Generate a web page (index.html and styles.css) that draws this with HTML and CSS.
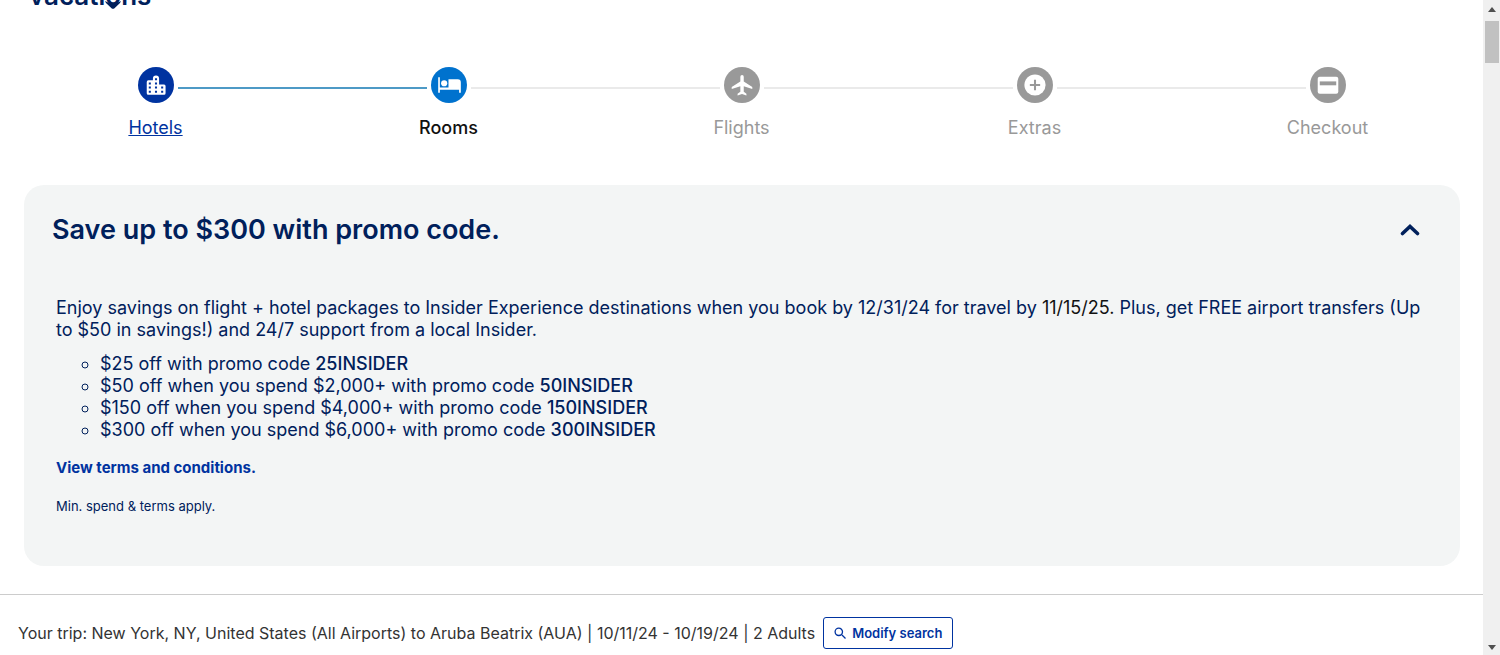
FILE: index.html
```html
<!DOCTYPE html>
<html lang="en">
<head>
<meta charset="utf-8">
<title>Vacations - Rooms</title>
<link rel="stylesheet" href="styles.css">
</head>
<body>
<div class="window">
  <div class="page">
    <header class="header">
      <a class="logo" href="#">vacati<span class="logo-pin">o<svg class="logo-tip" viewBox="0 0 16 8" aria-hidden="true"><path d="M0 0 Q8 5 16 0 L15 2 9.500 7.200Q8 8.500 6.500 7.200L1 2Z" fill="#00205b"/></svg></span>ns</a>
    </header>

    <nav aria-label="Booking progress">
      <ol class="steps">
        <li class="step step-done">
          <svg class="step-icon" viewBox="0 0 35 35" aria-hidden="true"><circle cx="17.500" cy="17.500" r="17.500" fill="currentColor"/><path fill="#fff" d="M8.500 14.500a1.500 1.500 0 0 1 1.500-1.500h4.500v-1.800a3 3 0 0 1 6 0V17h4.800a1.500 1.500 0 0 1 1.500 1.500v7a1.500 1.500 0 0 1-1.500 1.500H10a1.500 1.500 0 0 1-1.500-1.500z"/><path fill="currentColor" d="M10.500 15h2v2h-2zm0 4h2v2h-2zm0 4h2v2h-2zM16.500 11h2v2h-2zm0 4h2v2h-2zm0 4h2v2h-2zm0 4h2v2h-2zM22.500 19h2v2h-2zm0 4h2v2h-2z"/></svg>
          <a class="step-label" href="#">Hotels</a>
        </li>
        <li class="step step-current" aria-current="step">
          <svg class="step-icon" viewBox="0 0 35 35" aria-hidden="true"><circle cx="17.500" cy="17.500" r="17.500" fill="currentColor"/><path fill="#fff" d="M7 10h1.600v10H17v-8h9q3 0 3 3v10h-1.700v-3H8.600v3H7z"/><circle cx="12.800" cy="15.800" r="3" fill="#fff"/></svg>
          <span class="step-label">Rooms</span>
        </li>
        <li class="step">
          <svg class="step-icon" viewBox="0 0 35 35" aria-hidden="true"><circle cx="17.500" cy="17.500" r="17.500" fill="currentColor"/><path fill="#fff" d="M27.500 21.500v-2l-8.300-5.300V9.500a1.600 1.600 0 0 0-3.300 0v4.700L7.500 19.500v2l8.400-2.700v5.200l-2.700 2v1.600l4.300-1.300 4.300 1.300V26l-2.600-2v-5.200z"/></svg>
          <span class="step-label">Flights</span>
        </li>
        <li class="step">
          <svg class="step-icon" viewBox="0 0 35 35" aria-hidden="true"><circle cx="17.500" cy="17.500" r="17.500" fill="currentColor"/><circle cx="17.500" cy="17.500" r="10.300" fill="#fff"/><path d="M17.500 12.500v10M12.500 17.500h10" stroke="currentColor" stroke-width="2"/></svg>
          <span class="step-label">Extras</span>
        </li>
        <li class="step">
          <svg class="step-icon" viewBox="0 0 35 35" aria-hidden="true"><circle cx="17.500" cy="17.500" r="17.500" fill="currentColor"/><rect x="7.500" y="9.500" width="20" height="16.500" rx="2" fill="#fff"/><path fill="currentColor" d="M9.500 14h16v3.800h-16z"/></svg>
          <span class="step-label">Checkout</span>
        </li>
      </ol>
    </nav>

    <section class="promo">
      <div class="promo-head">
        <h2 class="promo-title">Save up to $300 with promo code.</h2>
        <button class="promo-toggle" type="button" aria-label="Collapse promotion" aria-expanded="true"><svg class="chevron" viewBox="0 0 20 12" aria-hidden="true"><path d="M2.500 9.500 10 2.500l7.500 7" fill="none" stroke="#00205b" stroke-width="3.600" stroke-linecap="round"/></svg></button>
      </div>
      <div class="promo-body">
        <p class="promo-text">Enjoy savings on flight + hotel packages to Insider Experience destinations when you book by 12/31/24 for travel by <span class="date">11/15/25.</span> Plus, get FREE airport transfers (Up to $50 in savings!) and 24/7 support from a local Insider.</p>
        <ul class="offers">
          <li>$25 off with promo code <strong class="code">25INSIDER</strong></li>
          <li>$50 off when you spend $2,000+ with promo code <strong class="code">50INSIDER</strong></li>
          <li>$150 off when you spend $4,000+ with promo code <strong class="code">150INSIDER</strong></li>
          <li>$300 off when you spend $6,000+ with promo code <strong class="code">300INSIDER</strong></li>
        </ul>
        <a class="terms" href="#">View terms and conditions.</a>
        <p class="fineprint">Min. spend &amp; terms apply.</p>
      </div>
    </section>

    <section class="trip">
      <p class="trip-text">Your trip: New York, NY, United States (All Airports) to Aruba Beatrix (AUA) | 10/11/24 - 10/19/24 | 2 Adults</p>
      <button class="modify" type="button"><svg class="search-icon" viewBox="0 0 12 12" aria-hidden="true"><path d="M8 8l3.500 3.500M8.500 4.800a3.700 3.700 0 1 1-7.400 0 3.700 3.700 0 0 1 7.400 0z" fill="none" stroke="currentColor" stroke-width="1.300"/></svg>Modify search</button>
    </section>
  </div>

  <div class="scrollbar" aria-hidden="true">
    <svg class="arrow" viewBox="0 0 8 5"><path d="M0 5 4 0l4 5z" fill="#505050"/></svg>
    <div class="track"><div class="thumb"></div></div>
    <svg class="arrow" viewBox="0 0 8 5"><path d="M0 0l4 5 4-5z" fill="#505050"/></svg>
  </div>
</div>
</body>
</html>
```
FILE: styles.css
```css
* { box-sizing: border-box; }

body {
  margin: 0;
  background: #fff;
  color: #00205b;
  font-family: Inter, "Liberation Sans", sans-serif;
}

p, h2, ul, ol { margin: 0; }

button { font-family: inherit; cursor: pointer; }

.window {
  display: flex;
  height: 100vh;
  overflow: hidden;
}

.page { flex: 1; min-width: 0; }

.header {
  display: flex;
  align-items: flex-end;
  height: 12px;
  padding-left: 29px;
  overflow: hidden;
}

.logo {
  color: #00205b;
  font-size: 26px;
  font-weight: 600;
  line-height: 32px;
  text-decoration: none;
}

.logo-pin { position: relative; }

.logo-tip {
  position: absolute;
  left: 0;
  bottom: 2px;
  width: 16px;
  height: 8px;
}

.steps {
  display: grid;
  grid-template-columns: repeat(5, 1fr);
  padding: 55px 9px 0;
  list-style: none;
}

.step {
  position: relative;
  display: flex;
  flex-direction: column;
  align-items: center;
  gap: 14px;
  color: #999;
}

.step-icon { width: 36px; height: 36px; }

.step-label {
  font-size: 18px;
  line-height: 22px;
}

.step-done { color: #0033a0; }
.step-current { color: #0072ce; }
.step-current .step-label { color: #111; font-weight: 500; }
a.step-label { color: #0033a0; }

/* connector running from one circle to the next */
.step:not(:last-child)::after {
  content: "";
  position: absolute;
  top: 20px;
  left: calc(50% + 22px);
  width: calc(100% - 44px);
  height: 2px;
  background: #eaeaea;
}

.step-done:not(:last-child)::after { background: #4d9ac6; }

.promo {
  margin: 46px 23px 28px 24px;
  padding: 28px;
  border-radius: 20px;
  background: #f3f5f5;
}

.promo-head {
  display: flex;
  justify-content: space-between;
  align-items: center;
  padding-right: 12px;
}

.promo-title {
  font-size: 27px;
  font-weight: 600;
  line-height: 34px;
}

.promo-toggle {
  display: flex;
  padding: 0;
  border: 0;
  background: none;
}

.chevron { width: 20px; height: 12px; }

.promo-body { padding: 50px 4px 23px; }

.promo-text, .offers {
  font-size: 18px;
  line-height: 22px;
}

.date { color: #111; }

.offers {
  margin: 12px 0 18px;
  padding-left: 44px;
  list-style: circle;
}

.code { font-weight: 500; }

.terms {
  display: block;
  color: #0033a0;
  font-size: 15px;
  font-weight: 700;
  line-height: 18px;
  text-decoration: none;
}

.fineprint {
  margin-top: 20px;
  font-size: 13px;
  line-height: 18px;
}

.trip {
  display: flex;
  align-items: center;
  gap: 8px;
  padding: 22px 18px 6px;
  border-top: 1px solid #ccc;
}

.trip-text {
  color: #333;
  font-size: 16px;
  line-height: 20px;
}

.modify {
  display: flex;
  align-items: center;
  gap: 6px;
  height: 32px;
  padding: 0 10px;
  border: 1px solid #0033a0;
  border-radius: 3px;
  background: #fff;
  color: #0033a0;
  font-size: 13px;
  font-weight: 600;
  white-space: nowrap;
}

.search-icon { width: 12px; height: 12px; }

.scrollbar {
  display: flex;
  flex-direction: column;
  align-items: center;
  gap: 9px;
  width: 17px;
  padding: 7px 1px 5px 2px;
  background: #f0f0f0;
}

.arrow { width: 8px; height: 5px; }
.track { flex: 1; align-self: stretch; }
.thumb { height: 42px; background: #c1c1c1; }
```
